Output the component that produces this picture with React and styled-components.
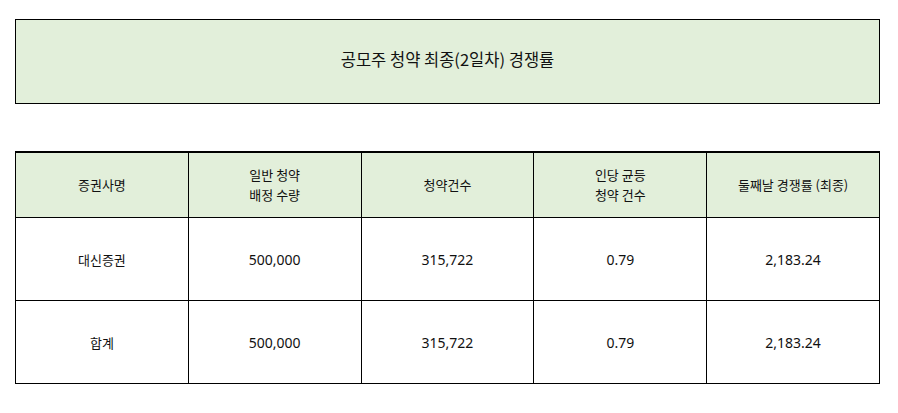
import React from "react";
import styled, { createGlobalStyle } from "styled-components";

const Global = createGlobalStyle`
  html, body { margin: 0; padding: 0; background: #fff; }
  body { font-family: "Noto Sans CJK KR", "Noto Sans", sans-serif; color: #111; }
`;

const Page = styled.div`
  width: 898px;
  padding: 19px 0 0 15px;
  box-sizing: border-box;
`;

const TitleBox = styled.div`
  width: 865px;
  height: 85px;
  box-sizing: border-box;
  border: 1px solid #000;
  background: #e2efda;
  display: flex;
  align-items: center;
  justify-content: center;
  font-size: 16.5px;
  padding-bottom: 5px;
`;

const Table = styled.table`
  margin-top: 47px;
  width: 865px;
  border-collapse: collapse;
  table-layout: fixed;
  border-top: 2px solid #000;
  font-size: 13px;
`;

const Th = styled.th`
  background: #e2efda;
  border: 1px solid #000;
  border-top: 2px solid #000;
  font-weight: normal;
  height: 64px;
  line-height: 20px;
  text-align: center;
  vertical-align: middle;
  padding: 0;
`;

const Td = styled.td`
  border: 1px solid #000;
  height: 82px;
  text-align: center;
  vertical-align: middle;
  padding: 0;
  font-family: ${(p) => (p.$numeric ? '"Noto Sans", sans-serif' : "inherit")};
  font-size: ${(p) => (p.$numeric ? "14px" : "13px")};
`;

const headers = [
  ["증권사명"],
  ["일반 청약", "배정 수량"],
  ["청약건수"],
  ["인당 균등", "청약 건수"],
  ["둘째날 경쟁률 (최종)"],
];

const rows = [
  ["대신증권", "500,000", "315,722", "0.79", "2,183.24"],
  ["합계", "500,000", "315,722", "0.79", "2,183.24"],
];

export default function App() {
  return (
    <Page>
      <Global />
      <TitleBox>공모주 청약 최종(2일차) 경쟁률</TitleBox>
      <Table>
        <thead>
          <tr>
            {headers.map((h, i) => (
              <Th key={i}>
                {h.map((l, j) => (
                  <div key={j}>{l}</div>
                ))}
              </Th>
            ))}
          </tr>
        </thead>
        <tbody>
          {rows.map((r, i) => (
            <tr key={i}>
              {r.map((c, j) => (
                <Td key={j} $numeric={j > 0}>
                  {c}
                </Td>
              ))}
            </tr>
          ))}
        </tbody>
      </Table>
    </Page>
  );
}
